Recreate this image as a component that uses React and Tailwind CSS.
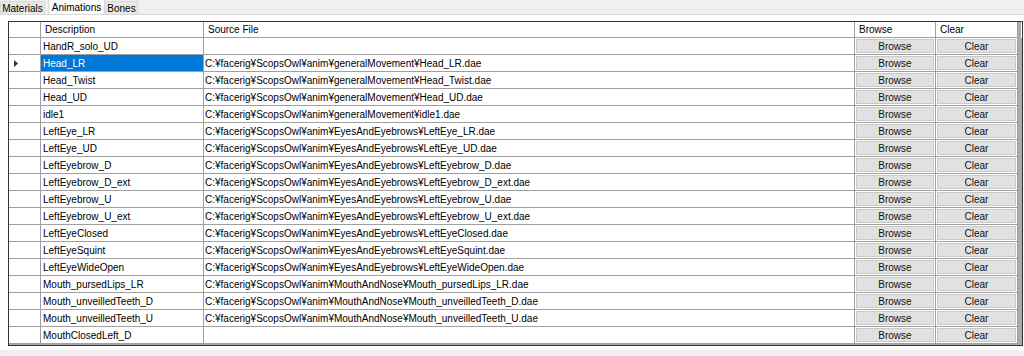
import React from 'react';

const base = 'C:¥facerig¥ScopsOwl¥anim¥';

const rows = [
  ['HandR_solo_UD', ''],
  ['Head_LR', base + 'generalMovement¥Head_LR.dae'],
  ['Head_Twist', base + 'generalMovement¥Head_Twist.dae'],
  ['Head_UD', base + 'generalMovement¥Head_UD.dae'],
  ['idle1', base + 'generalMovement¥idle1.dae'],
  ['LeftEye_LR', base + 'EyesAndEyebrows¥LeftEye_LR.dae'],
  ['LeftEye_UD', base + 'EyesAndEyebrows¥LeftEye_UD.dae'],
  ['LeftEyebrow_D', base + 'EyesAndEyebrows¥LeftEyebrow_D.dae'],
  ['LeftEyebrow_D_ext', base + 'EyesAndEyebrows¥LeftEyebrow_D_ext.dae'],
  ['LeftEyebrow_U', base + 'EyesAndEyebrows¥LeftEyebrow_U.dae'],
  ['LeftEyebrow_U_ext', base + 'EyesAndEyebrows¥LeftEyebrow_U_ext.dae'],
  ['LeftEyeClosed', base + 'EyesAndEyebrows¥LeftEyeClosed.dae'],
  ['LeftEyeSquint', base + 'EyesAndEyebrows¥LeftEyeSquint.dae'],
  ['LeftEyeWideOpen', base + 'EyesAndEyebrows¥LeftEyeWideOpen.dae'],
  ['Mouth_pursedLips_LR', base + 'MouthAndNose¥Mouth_pursedLips_LR.dae'],
  ['Mouth_unveilledTeeth_D', base + 'MouthAndNose¥Mouth_unveilledTeeth_D.dae'],
  ['Mouth_unveilledTeeth_U', base + 'MouthAndNose¥Mouth_unveilledTeeth_U.dae'],
  ['MouthClosedLeft_D', ''],
];

const cols = 'grid grid-cols-[32px_163px_651px_81px_82px_3px]';
const cell = 'border-r border-b border-[#a0a0a0] overflow-hidden whitespace-nowrap';

const GridButton = ({ label }) => (
  <div className={`${cell} bg-white p-px`}>
    <div className="h-full flex items-center justify-center pt-px bg-[#e1e1e1] border border-[#c8c8c8] leading-none text-[#111]">{label}</div>
  </div>
);

export default function App() {
  return (
    <div className="w-[1024px] h-[356px] bg-[#f0f0f0] text-[10px] text-black" style={{ fontFamily: '"Liberation Sans", "Noto Sans CJK JP", sans-serif' }}>
      {/* tabs */}
      <div className="h-[14px] flex items-end">
        <div className="w-[45px] h-[13px] flex items-center justify-center bg-[#e8e8e8] border border-b-0 border-[#d9d9d9]">Materials</div>
        <div className="ml-[3px] w-[57px] h-[15px] flex items-center justify-center bg-[#fafafa] border border-b-0 border-[#d9d9d9]">Animations</div>
        <div className="w-[33px] h-[13px] flex items-center justify-center bg-[#e8e8e8] border border-b-0 border-[#d9d9d9]">Bones</div>
      </div>

      <div className="h-[336px] bg-white border-t border-[#d9d9d9] pt-[6px] pl-[8px] pr-px">
        <div className="border border-[#333] bg-[#ababab] h-[325px] overflow-hidden">
          <div className={`${cols} h-[16px] bg-white`}>
            <div className={cell}></div>
            <div className={`${cell} pl-[4px] leading-[15px]`}>Description</div>
            <div className={`${cell} pl-[4px] leading-[15px]`}>Source File</div>
            <div className={`${cell} pl-[4px] leading-[15px]`}>Browse</div>
            <div className={`${cell} pl-[4px] leading-[15px]`}>Clear</div>
            <div className="bg-[#ababab]"></div>
          </div>
          {rows.map(([desc, src], i) => (
            <div key={desc} className={`${cols} h-[17px]`}>
              <div className={`${cell} bg-white flex items-center pl-[5px]`}>
                {i === 1 && (
                  <svg width="4" height="7" viewBox="0 0 4 7"><path d="M0 0L4 3.5L0 7Z" fill="#333" /></svg>
                )}
              </div>
              <div className={`${cell} pl-[2px] pt-px leading-[16px] ${i === 1 ? 'bg-[#0078d7] text-white' : 'bg-white'}`}>{desc}</div>
              <div className={`${cell} bg-white pl-px pt-px leading-[16px]`}>{src}</div>
              <GridButton label="Browse" />
              <GridButton label="Clear" />
              <div className="bg-[#ababab]"></div>
            </div>
          ))}
        </div>
      </div>
    </div>
  );
}
